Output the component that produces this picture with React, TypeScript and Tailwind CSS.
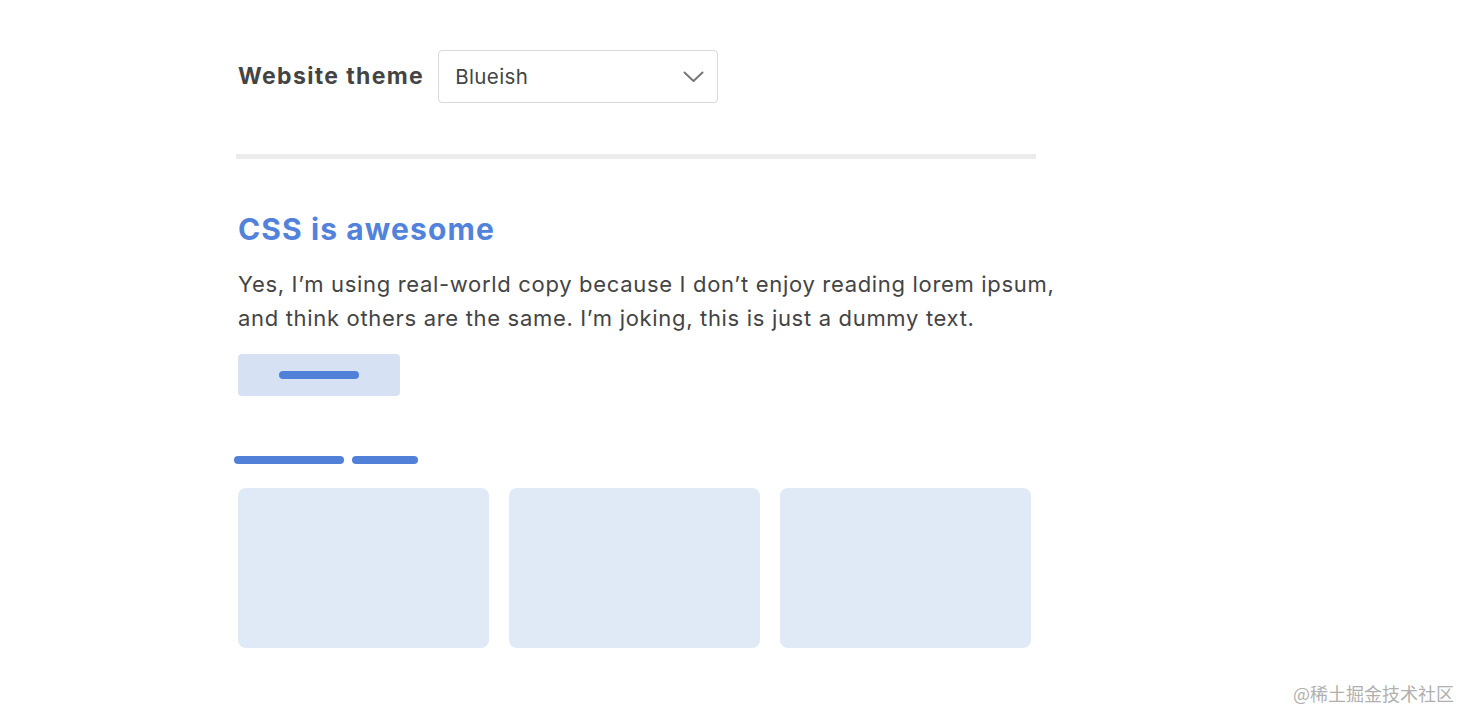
export default function App() {
  return (
    <div className="relative min-h-screen bg-white font-['Inter',sans-serif] text-[#444]">
      <div className="ml-[236px] w-[800px] pt-[50px]">
        <div className="flex items-center gap-[14px] pl-[2px]">
          <label className="text-[23px] font-bold tracking-[1.35px] text-[#444]">Website theme</label>
          <div className="flex h-[53px] w-[280px] items-center justify-between rounded-[4px] border border-[#d9d9d9] bg-white pl-[16px] pr-[13px]">
            <span className="pt-[1px] text-[20.5px] tracking-[0.4px] text-[#444]">Blueish</span>
            <svg width="21" height="12" viewBox="0 0 21 12" fill="none">
              <polyline
                points="1.5,1.5 10.5,10 19.5,1.5"
                stroke="#777"
                strokeWidth="2"
                strokeLinecap="round"
                strokeLinejoin="round"
              />
            </svg>
          </div>
        </div>

        <div className="mt-[51px] h-[5px] w-[800px] bg-[#ececec]" />

        <section className="pl-[2px] pt-[50px]">
          <h2 className="text-[30px] font-bold leading-[40px] tracking-[1.1px] text-[#5282dc]">
            CSS is awesome
          </h2>
          <p className="mt-[18px] w-[840px] text-[22px] leading-[34px] tracking-[0.68px] text-[#444]">
            Yes, I’m using real-world copy because I don’t enjoy reading lorem ipsum,
            <br />
            and think others are the same. I’m joking, this is just a dummy text.
          </p>
          <div className="mt-[19px] flex h-[42px] w-[162px] items-center justify-center rounded-[4px] bg-[#d6e2f4]">
            <div className="h-[8px] w-[80px] rounded-full bg-[#5080d8]" />
          </div>
        </section>

        <div className="-ml-[2px] mt-[60px] flex gap-[8px]">
          <div className="h-[8px] w-[110px] rounded-full bg-[#5080d8]" />
          <div className="h-[8px] w-[66px] rounded-full bg-[#5080d8]" />
        </div>

        <div className="mt-[24px] flex gap-[20px] pl-[2px]">
          <div className="h-[160px] w-[251px] rounded-[8px] bg-[#e0eaf7]" />
          <div className="h-[160px] w-[251px] rounded-[8px] bg-[#e0eaf7]" />
          <div className="h-[160px] w-[251px] rounded-[8px] bg-[#e0eaf7]" />
        </div>
      </div>

      <div className="absolute bottom-[17px] right-[20px] font-['Noto_Sans_CJK_SC',sans-serif] text-[18px] text-[#b0b0b0]">
        @稀土掘金技术社区
      </div>
    </div>
  );
}
